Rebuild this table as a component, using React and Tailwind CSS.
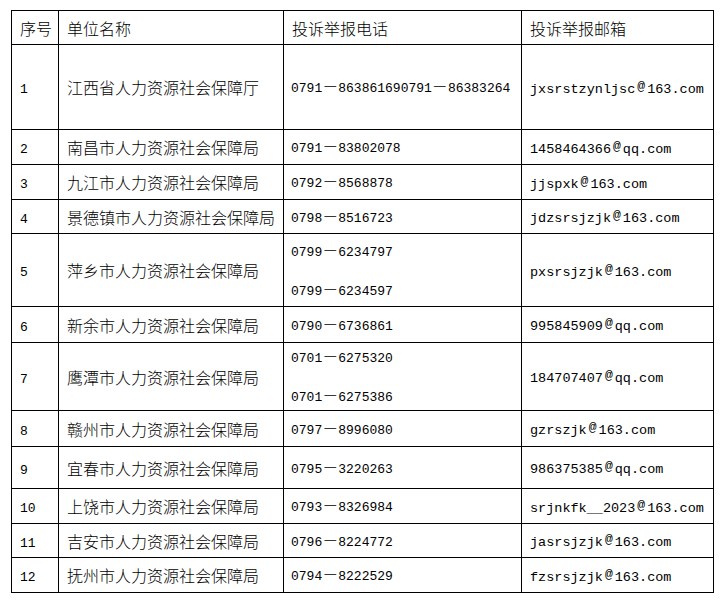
import React from "react";

const rows = [
  { no: "1", name: "江西省人力资源社会保障厅", tel: ["0791－863861690791－86383264"], mail: "jxsrstzynljsc@163.com", h: "h-[85px]" },
  { no: "2", name: "南昌市人力资源社会保障局", tel: ["0791－83802078"], mail: "1458464366@qq.com", h: "h-[35px]" },
  { no: "3", name: "九江市人力资源社会保障局", tel: ["0792－8568878"], mail: "jjspxk@163.com", h: "h-[35px]" },
  { no: "4", name: "景德镇市人力资源社会保障局", tel: ["0798－8516723"], mail: "jdzsrsjzjk@163.com", h: "h-[34px]" },
  { no: "5", name: "萍乡市人力资源社会保障局", tel: ["0799－6234797", "0799－6234597"], mail: "pxsrsjzjk@163.com", h: "h-[73px]" },
  { no: "6", name: "新余市人力资源社会保障局", tel: ["0790－6736861"], mail: "995845909@qq.com", h: "h-[36px]" },
  { no: "7", name: "鹰潭市人力资源社会保障局", tel: ["0701－6275320", "0701－6275386"], mail: "184707407@qq.com", h: "h-[68px]" },
  { no: "8", name: "赣州市人力资源社会保障局", tel: ["0797－8996080"], mail: "gzrszjk@163.com", h: "h-[36px]" },
  { no: "9", name: "宜春市人力资源社会保障局", tel: ["0795－3220263"], mail: "986375385@qq.com", h: "h-[42px]" },
  { no: "10", name: "上饶市人力资源社会保障局", tel: ["0793－8326984"], mail: "srjnkfk__2023@163.com", h: "h-[35px]" },
  { no: "11", name: "吉安市人力资源社会保障局", tel: ["0796－8224772"], mail: "jasrsjzjk@163.com", h: "h-[34px]" },
  { no: "12", name: "抚州市人力资源社会保障局", tel: ["0794－8222529"], mail: "fzsrsjzjk@163.com", h: "h-[35px]" },
];

// ascii runs get the narrow mono face, everything else stays in the CJK face
function Mixed({ text }) {
  const parts = text.match(/[\x20-\x7e]+|[^\x20-\x7e]+/g) || [];
  return parts.map((p, i) =>
    /^[\x20-\x7e]+$/.test(p) ? (
      <span key={i} className="font-['Liberation_Mono',monospace] text-[13px]">{p}</span>
    ) : (
      <span key={i}>{p}</span>
    )
  );
}

function Mail({ text }) {
  const [user, host] = text.split("@");
  return (
    <span className="font-['Liberation_Mono',monospace] text-[13.5px]">
      {user}
      <span className="relative -top-[3px] px-[2px] text-[13px]">@</span>
      {host}
    </span>
  );
}

const cell = "border border-black pl-2 pr-1 align-middle text-left font-light";

export default function App() {
  return (
    <div className="min-h-[605px] bg-white pl-[11px] pt-[10px] text-black font-['Noto_Sans_CJK_SC',sans-serif] text-[16px]">
      <table className="table-fixed border-collapse w-[702px]">
        <colgroup>
          <col className="w-[47px]" />
          <col className="w-[225px]" />
          <col className="w-[238px]" />
          <col className="w-[192px]" />
        </colgroup>
        <thead>
          <tr className="h-[34px]">
            <th className={cell}>序号</th>
            <th className={cell}>单位名称</th>
            <th className={cell}>投诉举报电话</th>
            <th className={cell}>投诉举报邮箱</th>
          </tr>
        </thead>
        <tbody>
          {rows.map((r) => (
            <tr key={r.no} className={r.h}>
              <td className={cell}><Mixed text={r.no} /></td>
              <td className={cell}>{r.name}</td>
              <td className={`${cell} pl-[7px] whitespace-nowrap`}>
                <div className="flex flex-col gap-[13px]">
                  {r.tel.map((t) => (
                    <div key={t} className="leading-[22px]"><Mixed text={t} /></div>
                  ))}
                </div>
              </td>
              <td className={`${cell} whitespace-nowrap`}><Mail text={r.mail} /></td>
            </tr>
          ))}
        </tbody>
      </table>
    </div>
  );
}
